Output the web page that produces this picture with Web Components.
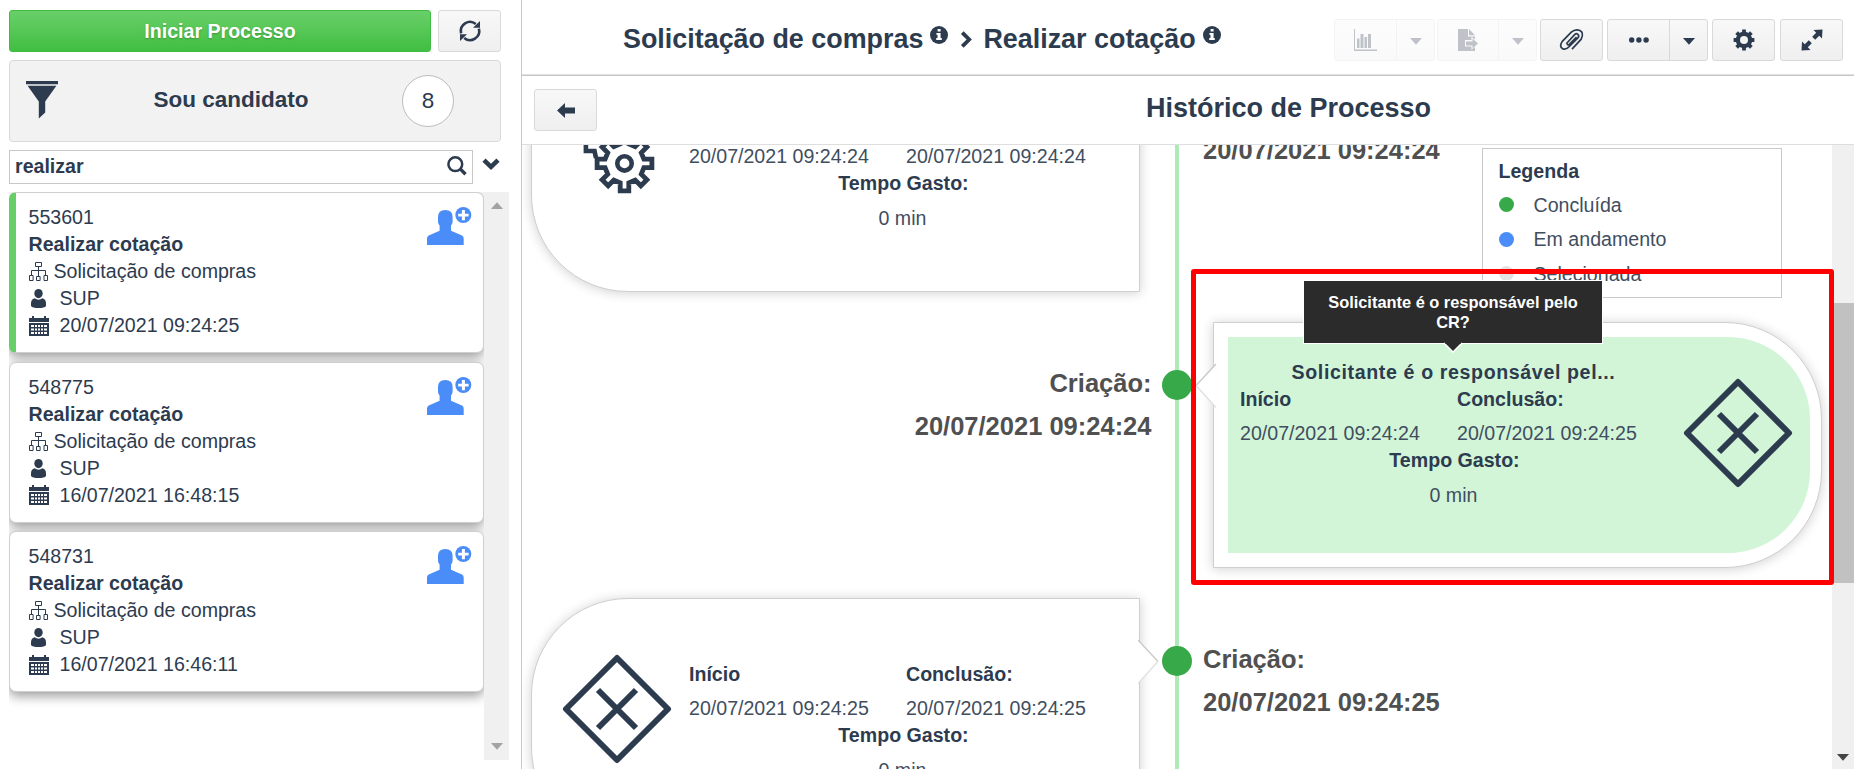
<!DOCTYPE html>
<html lang="pt-BR">
<head>
<meta charset="utf-8">
<title>Histórico de Processo</title>
<style>
  html, body {
    margin: 0;
    height: 100%;
    overflow: hidden;
    background: #fff;
  }
  body {
    --ink: #2d3b4f;
    color: var(--ink);
    font-family: "Liberation Sans", Arial, sans-serif;
    font-size: 19.6px;
  }
</style>
</head>
<body>
<app-layout>
  <task-sidebar slot="sidebar" search="realizar">
    <task-filter slot="filter" count="8">Sou candidato</task-filter>
    <task-card active number="553601" process="Solicitação de compras" group="SUP" date="20/07/2021 09:24:25">Realizar cotação</task-card>
    <task-card number="548775" process="Solicitação de compras" group="SUP" date="16/07/2021 16:48:15">Realizar cotação</task-card>
    <task-card number="548731" process="Solicitação de compras" group="SUP" date="16/07/2021 16:46:11">Realizar cotação</task-card>
  </task-sidebar>

  <process-header>
    <span slot="process">Solicitação de compras</span>
    <span slot="activity">Realizar cotação</span>
    <tool-button slot="tools" icon="chart" split disabled></tool-button>
    <tool-button slot="tools" icon="export" split disabled style="margin-left: 2px; width: 100px"></tool-button>
    <tool-button slot="tools" icon="clip" style="margin-left: 3px"></tool-button>
    <tool-button slot="tools" icon="dots" split style="margin-left: 4px"></tool-button>
    <tool-button slot="tools" icon="gear" style="margin-left: 4px"></tool-button>
    <tool-button slot="tools" icon="expand" style="margin-left: 5px"></tool-button>
  </process-header>

  <section-bar>Histórico de Processo</section-bar>

  <history-timeline>
    <history-item side="left" cut icon="gears" label="20/07/2021 09:24:24" start="20/07/2021 09:24:24" end="20/07/2021 09:24:24" spent="0 min"></history-item>
    <history-item side="right" selected icon="gateway" label="20/07/2021 09:24:24" start="20/07/2021 09:24:24" end="20/07/2021 09:24:25" spent="0 min" tip="Solicitante é o responsável pelo CR?">Solicitante é o responsável pel...</history-item>
    <history-item side="left" icon="gateway" label="20/07/2021 09:24:25" start="20/07/2021 09:24:25" end="20/07/2021 09:24:25" spent="0 min"></history-item>
    <status-legend slot="legend"></status-legend>
  </history-timeline>
</app-layout>

<script>
// contour of the eight-toothed gear, centred on 0,0
function gearPath(root, tip, half) {
  const points = [];
  for (let i = 0; i < 8; i++) {
    const a = i * Math.PI / 4;
    [[root, -half], [tip, -half], [tip, half], [root, half]].forEach(([x, y]) => {
      points.push((x * Math.cos(a) - y * Math.sin(a)).toFixed(2) + ' ' + (x * Math.sin(a) + y * Math.cos(a)).toFixed(2));
    });
  }
  return 'M' + points.join('L') + 'Z';
}

// name: [width, height, markup]
const icons = {
  refresh: [22, 22, '<path d="M2.1 13.4A9.2 9.2 0 0 1 16.8 4M19.9 8.600A9.2 9.2 0 0 1 5.200 18" fill="none" stroke="currentColor" stroke-width="2.6"/><path d="M21 1v6.800h-7zM1 21v-6.800h7z"/>'],
  funnel: [32, 38, '<path d="M0 0h32v3.3H0zM1.6 4.8h28.8L19.2 20.5v11L12.8 37.6V20.5z"/>'],
  search: [20, 20, '<circle cx="8.3" cy="8.2" r="6.9" fill="none" stroke="currentColor" stroke-width="2.5"/><path d="M13 12.6l5.5 5.6" stroke="currentColor" stroke-width="3.4"/>'],
  chevron: [18, 12, '<path d="M2 2.2l7 6.6 7-6.6" fill="none" stroke="currentColor" stroke-width="4.6"/>'],
  next: [13, 17, '<path d="M2.3 1.6l6.9 6.9-6.9 6.9" fill="none" stroke="currentColor" stroke-width="3.8"/>'],
  info: [18, 18, '<circle cx="9" cy="9" r="9"/><path d="M7.6 2.9h3v2.7h-3zM6.4 7h4.2v5.1h1.2v1.9H6.2v-1.9h1.3V8.8H6.4z" fill="#fff"/>'],
  sitemap: [19, 19, '<path d="M6.5.5h6v4h-6zM.5 13.5h3.6v5H.5zM7.5 14.5h3.6v4H7.500zM15 13.500h3.500v5H15zM9.500 4.500v10M2.500 13.500v-5h14v5" fill="none" stroke="currentColor"/>'],
  person: [15, 19, '<ellipse cx="7.5" cy="4.600" rx="4.200" ry="4.600"/><path d="M3.600 9.300q3.900 2.800 7.800 0Q15 10.300 15 14.500V17q-1.500 2-7.500 2T0 17v-2.500Q0 10.300 3.600 9.300z"/>'],
  calendar: [20, 20, '<path d="M0 2h3V0h2v2h10V0h2v2h3v4H0zM0 7h20v13H0z"/><path d="M2 9h3v2H2zM6 9h2v2H6zM9 9h2v2H9zM12 9h2v2h-2zM15 9h3v2h-3zM2 12.500h3v2H2zM6 12.500h2v2H6zM9 12.500h2v2H9zM12 12.500h2v2h-2zM15 12.500h3v2h-3zM2 16h3v2H2zM6 16h2v2H6zM9 16h2v2H9zM12 16h2v2h-2zM15 16h3v2h-3z" fill="#fff"/>'],
  adduser: [45, 39, '<path d="M11 10Q11 3 18.300 3T25.600 10v5q-.3 2-1.600 3.500v5.200L35 28.500q1.700 1 1.700 3V38H0v-6.500q0-2 1.700-3l10.900-4.800v-5.200Q11.300 17 11 15z"/><circle cx="36.300" cy="8" r="8"/><path d="M34.900 3h3v3.700h3.700v2.800h-3.700v3.700h-3V9.500h-3.700V6.700h3.700z" fill="#fff"/>'],
  chart: [23, 22, '<path d="M0 0h1v20.500h22v1.500H0zM3 9.500h2.500V19H3zM6.500 5h3v14h-3zM10.500 8h2.500v11h-2.500zM14 5h3v14h-3z"/>'],
  export: [20, 22, '<path d="M0 0h10v7.500h7v3l-3.500-2.500v3H7v6.500h6.500v3L17 18v4H0z"/><path d="M11 0l6 6.300h-6zM8 12.500h6.500V9.500l5.500 5-5.500 5v-3H8z"/>'],
  clip: [24, 22, '<path d="M6.300 14.800L14.600 5.700Q16.300 4 17.900 5.300t.2 3.400L9.300 17.500Q5.500 21.600 2.300 19.500T2.100 12.600L11.300 3.200Q15.500-.6 19.900 1.600T21.200 10.200L12 20.200M7 15.200q1.200 1.300 2.600 0L16.500 8" fill="none" stroke="currentColor" stroke-width="1.700"/>'],
  dots: [20, 6, '<circle cx="2.700" cy="3" r="2.700"/><circle cx="9.900" cy="3" r="2.700"/><circle cx="17.100" cy="3" r="2.700"/>'],
  gear: [22, 22, '<g transform="translate(11 11)"><path d="' + gearPath(7.2, 10.4, 1.9) + '"/><circle r="6.300" fill="none" stroke="currentColor" stroke-width="4"/><circle r="4" fill="#f3f3f3"/></g>'],
  expand: [22, 22, '<path d="M12.500 1L21.500.5 21 9.500 18.200 6.800 14.200 10.800 11.200 7.800 15.200 3.800zM9.500 21L.5 21.500 1 12.500 3.800 15.200 7.800 11.200 10.800 14.200 6.800 18.200z"/>'],
  back: [18, 15, '<path d="M0 7.500L8 0v4.400h10v6.200H8V15z"/>'],
  caret: [12, 7, '<path d="M0 0h12L6 6.800z"/>'],
  gateway: [108, 108, '<path d="M54 3L105 54 54 105 3 54zM35 35l38 38M73 35L35 73" fill="none" stroke="currentColor" stroke-width="6" stroke-linejoin="round"/>'],
  gears: [108, 108, '<g fill="none" stroke="currentColor"><path d="M34 36H22.900v12H31.500l1.500 7" stroke-width="4.600"/><g transform="translate(61.500 60.400)"><path d="' + gearPath(19.4, 27.4, 4.3) + '" fill="#fff" stroke-width="4.800"/><circle r="7.200" stroke-width="4.600"/></g></g>']
};

class UiIcon extends HTMLElement {
  constructor() {
    super();
    this.attachShadow({ mode: 'open' });
  }

  connectedCallback() {
    const [w, h, body] = icons[this.getAttribute('name')];
    this.shadowRoot.innerHTML = `
      <style>
        :host { display: inline-block; flex: none; line-height: 0; }
        svg { display: block; overflow: visible; }
      </style>
      <svg width="${w}" height="${h}" viewBox="0 0 ${w} ${h}" fill="currentColor">${body}</svg>
    `;
  }
}

class AppLayout extends HTMLElement {
  constructor() {
    super();
    this.attachShadow({ mode: 'open' });
    this.shadowRoot.innerHTML = `
      <style>
        :host { display: grid; grid-template-columns: 521px 1fr; height: 769px; }
        main {
          display: flex;
          flex-direction: column;
          min-width: 0;
          min-height: 0;
          border-left: 1px solid #c9c9c9;
        }
      </style>
      <slot name="sidebar"></slot>
      <main><slot></slot></main>
    `;
  }
}

class ToolButton extends HTMLElement {
  constructor() {
    super();
    this.attachShadow({ mode: 'open' });
  }

  connectedCallback() {
    const split = this.hasAttribute('split');
    this.shadowRoot.innerHTML = `
      <style>
        :host {
          box-sizing: border-box;
          display: flex;
          flex: none;
          width: ${split ? 101 : 63}px;
          height: 42px;
          border: 1px solid #d9d9d9;
          border-radius: 3px;
          background: linear-gradient(#f8f8f8, #efefef);
        }
        :host([disabled]) { opacity: .3; }
        span { flex: 1; display: flex; align-items: center; justify-content: center; }
        .more { flex: 0 0 37px; border-left: 1px solid #d9d9d9; padding-top: 3px; }
      </style>
      <span><ui-icon name="${this.getAttribute('icon')}"></ui-icon></span>
      ${split ? '<span class="more"><ui-icon name="caret"></ui-icon></span>' : ''}
    `;
  }
}

class TaskSidebar extends HTMLElement {
  constructor() {
    super();
    this.attachShadow({ mode: 'open' });
  }

  connectedCallback() {
    this.shadowRoot.innerHTML = `
      <style>
        :host { display: flex; flex-direction: column; padding: 10px 12px 9px 9px; height: 750px; }
        .actions { display: flex; justify-content: space-between; width: 492px; }
        .start {
          box-sizing: border-box;
          width: 422px;
          height: 42px;
          border: 1px solid #3fbc44;
          border-radius: 3px;
          background: linear-gradient(#69cf69, #41bf41);
          color: #fff;
          font-weight: bold;
          line-height: 41px;
          text-align: center;
          text-shadow: 0 1px 2px rgba(0, 0, 0, .25);
        }
        .search { display: flex; align-items: center; margin-top: 8px; }
        .field {
          box-sizing: border-box;
          display: flex;
          align-items: center;
          justify-content: space-between;
          width: 464px;
          height: 34px;
          padding: 0 5px 2px;
          border: 1px solid #c8c8c8;
          font-weight: bold;
        }
        .search > ui-icon { margin: -6px 0 0 9px; }
        .list { display: flex; flex: 1; margin-top: 8px; min-height: 0; }
        .cards {
          display: flex;
          flex-direction: column;
          gap: 8.5px;
          width: 475px;
          overflow: hidden;
        }
        .scroll {
          display: flex;
          flex-direction: column;
          justify-content: space-between;
          align-items: center;
          width: 25px;
          padding: 10px 0;
          box-sizing: border-box;
          background: #f0f0f0;
          color: #a3a3a3;
        }
        .up { transform: rotate(180deg); }
      </style>
      <div class="actions">
        <div class="start">Iniciar Processo</div>
        <tool-button icon="refresh"></tool-button>
      </div>
      <slot name="filter"></slot>
      <div class="search">
        <div class="field"><span>${this.getAttribute('search')}</span><ui-icon name="search"></ui-icon></div>
        <ui-icon name="chevron"></ui-icon>
      </div>
      <div class="list">
        <div class="cards"><slot></slot></div>
        <div class="scroll"><ui-icon class="up" name="caret"></ui-icon><ui-icon name="caret"></ui-icon></div>
      </div>
    `;
  }
}

class TaskFilter extends HTMLElement {
  constructor() {
    super();
    this.attachShadow({ mode: 'open' });
  }

  connectedCallback() {
    this.shadowRoot.innerHTML = `
      <style>
        :host {
          box-sizing: border-box;
          display: flex;
          align-items: center;
          width: 492px;
          height: 82px;
          margin-top: 8px;
          padding: 0 46px 0 16px;
          border: 1px solid #d9d9d9;
          border-radius: 4px;
          background: #f2f2f2;
        }
        ui-icon { margin-top: -2px; }
        .name { flex: 1; padding: 0 0 2px 2px; text-align: center; font-weight: bold; font-size: 22.5px; }
        .count {
          box-sizing: border-box;
          width: 52px;
          height: 52px;
          border: 1px solid #bdbdbd;
          border-radius: 50%;
          background: #fff;
          font-size: 22.5px;
          line-height: 50px;
          text-align: center;
        }
      </style>
      <ui-icon name="funnel"></ui-icon>
      <span class="name"><slot></slot></span>
      <span class="count">${this.getAttribute('count')}</span>
    `;
  }
}

class TaskCard extends HTMLElement {
  constructor() {
    super();
    this.attachShadow({ mode: 'open' });
  }

  connectedCallback() {
    this.shadowRoot.innerHTML = `
      <style>
        :host {
          box-sizing: border-box;
          display: flex;
          flex: none;
          justify-content: space-between;
          width: 475px;
          height: 161px;
          padding: 11px 11px 0 18.5px;
          border: 1px solid #cfcfcf;
          border-radius: 7px;
          background: #fff;
          box-shadow: 0 4px 12px rgba(0, 0, 0, .4);
          line-height: 27.1px;
        }
        :host([active]) { border-left: 7px solid #67cf67; padding-left: 12.5px; }
        .row { display: flex; align-items: center; }
        .row ui-icon { width: 25px; }
        .row.wide ui-icon { width: 31px; }
        .row.wide .person { margin-left: 2px; width: 29px; }
        .user { margin-top: 3px; color: #4a8df8; }
      </style>
      <div>
        <div>${this.getAttribute('number')}</div>
        <b><slot></slot></b>
        <div class="row"><ui-icon name="sitemap"></ui-icon>${this.getAttribute('process')}</div>
        <div class="row wide"><ui-icon class="person" name="person"></ui-icon>${this.getAttribute('group')}</div>
        <div class="row wide"><ui-icon name="calendar"></ui-icon>${this.getAttribute('date')}</div>
      </div>
      <ui-icon class="user" name="adduser"></ui-icon>
    `;
  }
}

class ProcessHeader extends HTMLElement {
  constructor() {
    super();
    this.attachShadow({ mode: 'open' });
    this.shadowRoot.innerHTML = `
      <style>
        :host {
          box-sizing: border-box;
          display: flex;
          flex: none;
          align-items: center;
          justify-content: space-between;
          height: 76px;
          padding: 4px 11px 0 101px;
          border-bottom: 1px solid #c6c6c6;
          box-shadow: inset 0 -1px #e2e2e2;
        }
        .path { display: flex; align-items: center; font-size: 26.9px; font-weight: bold; }
        .info { margin: -9px 0 0 7px; }
        .next { margin: 0 10px 0 12px; }
        .tools { display: flex; }
      </style>
      <div class="path">
        <slot name="process"></slot><ui-icon class="info" name="info"></ui-icon>
        <ui-icon class="next" name="next"></ui-icon>
        <slot name="activity"></slot><ui-icon class="info" name="info"></ui-icon>
      </div>
      <div class="tools"><slot name="tools"></slot></div>
    `;
  }
}

class SectionBar extends HTMLElement {
  constructor() {
    super();
    this.attachShadow({ mode: 'open' });
    this.shadowRoot.innerHTML = `
      <style>
        :host {
          box-sizing: border-box;
          display: grid;
          grid-template-columns: 63px 1fr;
          align-items: center;
          flex: none;
          height: 69px;
          padding: 0 12px;
          border-bottom: 1px solid #dedede;
        }
        h2 { margin: 0; padding: 0 0 3px 138px; font-size: 27px; text-align: center; }
      </style>
      <tool-button icon="back"></tool-button>
      <h2><slot></slot></h2>
    `;
  }
}

class HistoryTimeline extends HTMLElement {
  constructor() {
    super();
    this.attachShadow({ mode: 'open' });
    this.shadowRoot.innerHTML = `
      <style>
        :host { display: flex; flex: 1; min-height: 0; }
        /* the selection frame runs 2px over the scroll bar */
        .view { position: relative; flex: 1; min-height: 0; clip-path: inset(0 -2px 0 0); }
        /* scrolled so that the first card is cut by the bar above */
        .items {
          display: flex;
          flex-direction: column;
          gap: 30px;
          margin-top: -99px;
          padding-left: 9px;
          background: linear-gradient(#aeeab8, #aeeab8) 653px 0 / 4px 100% no-repeat;
        }
        .scroll {
          box-sizing: border-box;
          display: flex;
          flex-direction: column;
          align-items: center;
          justify-content: space-between;
          width: 22px;
          padding-top: 158px;
          padding-bottom: 8px;
          background: #f0f0f0;
          color: #444;
        }
        .thumb { width: 100%; height: 280px; background: #c1c1c1; }
      </style>
      <div class="view">
        <slot name="legend"></slot>
        <div class="items"><slot></slot></div>
      </div>
      <div class="scroll"><div class="thumb"></div><ui-icon name="caret"></ui-icon></div>
    `;
  }
}

class HistoryItem extends HTMLElement {
  constructor() {
    super();
    this.attachShadow({ mode: 'open' });
  }

  connectedCallback() {
    const tip = this.getAttribute('tip');
    this.shadowRoot.innerHTML = `
      <style>
        :host {
          position: relative;
          display: flex;
          flex: none;
          width: 1291px;
          height: 246px;
        }
        :host([side=right]) { flex-direction: row-reverse; }
        .dot {
          position: absolute;
          left: 631px;
          top: 48px;
          width: 30px;
          height: 30px;
          border-radius: 50%;
          background: #38a948;
        }
        .card {
          position: relative;
          box-sizing: border-box;
          display: flex;
          width: 609px;
          height: 246px;
          padding: 14px;
          border: 1px solid #cfcfcf;
          border-radius: 97px 0 0 97px;
          background: #fff;
          box-shadow: 0 1px 12px rgba(0, 0, 0, .19);
        }
        :host([side=right]) .card { padding-right: 11px; border-radius: 0 97px 97px 0; }
        .body {
          display: flex;
          flex: 1;
          gap: 18px;
          padding-left: 17px;
        }
        :host([side=right]) .body {
          flex-direction: row-reverse;
          justify-content: flex-end;
          gap: 17px;
          padding-left: 12px;
          border-radius: 0 82px 82px 0;
        }
        :host([selected]) .body { background: #d2f5d8; }
        .body > ui-icon { margin-top: 41.5px; }
        .info { width: 427px; padding-top: 21px; line-height: 27px; text-align: center; }
        :host([side=right]) .info { padding-top: 22px; }
        .title { height: 27px; font-weight: bold; letter-spacing: .62px; }
        .times { display: grid; grid-template-columns: 217px 1fr; text-align: left; }
        .total { padding-left: 2px; }
        p { margin: 0; padding-top: 7px; color: #414e60; }
        .spent { padding-top: 8px; }
        .arrow { position: absolute; top: 40px; right: -21px; }
        :host([side=right]) .arrow { right: auto; left: -20px; transform: scaleX(-1); }
        :host([cut]) .title, :host([cut]) .times b, :host([cut]) .arrow { visibility: hidden; }
        .mark {
          position: absolute;
          left: 660px;
          top: -53px;
          box-sizing: border-box;
          width: 643px;
          height: 316px;
          border: 5px solid #f00;
          border-radius: 3px;
        }
        .tip {
          position: absolute;
          left: 90px;
          top: -42px;
          box-sizing: border-box;
          width: 298px;
          height: 62px;
          padding: 11px 20px;
          background: #2b2b2b;
          box-shadow: 0 0 0 1px #fff;
          color: #fff;
          font-size: 16.4px;
          font-weight: bold;
          line-height: 20px;
          text-align: center;
        }
        .tip svg { position: absolute; left: 139px; top: 61px; }
      </style>
      <div class="card">
        <svg class="arrow" width="22" height="46" fill="none">
          <path d="M0 1L20 22.500 0 44.500z" fill="#fff"/>
          <path d="M0 1L20 22.500" stroke="#c8c8c8" stroke-width="1.300"/>
          <path d="M20 22.500L0 44.500" stroke="#e0e0e0" stroke-width="1.300"/>
        </svg>
        <div class="body">
          <ui-icon name="${this.getAttribute('icon')}"></ui-icon>
          <div class="info">
            <div class="title"><slot></slot></div>
            <div class="times">
              <b>Início</b><b>Conclusão:</b>
              <p>${this.getAttribute('start')}</p><p>${this.getAttribute('end')}</p>
            </div>
            <b class="total">Tempo Gasto:</b>
            <p class="spent">${this.getAttribute('spent')}</p>
          </div>
        </div>
        ${tip ? `<div class="tip">${tip}<svg width="20" height="11"><path d="M1 1L10 10 19 1" fill="#2b2b2b" stroke="#fff" stroke-width="1.500"/><path d="M2 0h16v1.600H2z" fill="#2b2b2b"/></svg></div>` : ''}
      </div>
      <date-label side="${this.getAttribute('side')}" ${this.hasAttribute('cut') ? 'cut' : ''}>${this.getAttribute('label')}</date-label>
      <span class="dot"></span>
      ${this.hasAttribute('selected') ? '<div class="mark"></div>' : ''}
    `;
  }
}

class DateLabel extends HTMLElement {
  constructor() {
    super();
    this.attachShadow({ mode: 'open' });
    this.shadowRoot.innerHTML = `
      <style>
        :host {
          flex: 1;
          padding: 40px 0 0 63px;
          color: #505050;
          font-size: 25.5px;
          font-weight: bold;
          line-height: 42.5px;
        }
        :host([side=right]) { padding: 40px 61.5px 0 0; text-align: right; }
        :host([cut]) div { visibility: hidden; }
      </style>
      <div>Criação:</div>
      <slot></slot>
    `;
  }
}

class StatusLegend extends HTMLElement {
  constructor() {
    super();
    this.attachShadow({ mode: 'open' });
    this.shadowRoot.innerHTML = `
      <style>
        :host {
          position: absolute;
          right: 50px;
          top: 3px;
          box-sizing: border-box;
          width: 300px;
          height: 150px;
          padding: 4.5px 15.5px;
          border: 1px solid #c9c9c9;
          background: #fff;
          line-height: 34.4px;
        }
        div { display: flex; align-items: center; color: #414e60; }
        i { width: 15px; height: 15px; margin: 0 20px 1px 0; border-radius: 50%; }
      </style>
      <b>Legenda</b>
      <div><i style="background: #38a948"></i>Concluída</div>
      <div><i style="background: #4a8df8"></i>Em andamento</div>
      <div><i style="background: #e3e3e3"></i>Selecionada</div>
    `;
  }
}

customElements.define('ui-icon', UiIcon);
customElements.define('tool-button', ToolButton);
customElements.define('task-filter', TaskFilter);
customElements.define('task-card', TaskCard);
customElements.define('task-sidebar', TaskSidebar);
customElements.define('process-header', ProcessHeader);
customElements.define('section-bar', SectionBar);
customElements.define('date-label', DateLabel);
customElements.define('history-item', HistoryItem);
customElements.define('status-legend', StatusLegend);
customElements.define('history-timeline', HistoryTimeline);
customElements.define('app-layout', AppLayout);
</script>
</body>
</html>
